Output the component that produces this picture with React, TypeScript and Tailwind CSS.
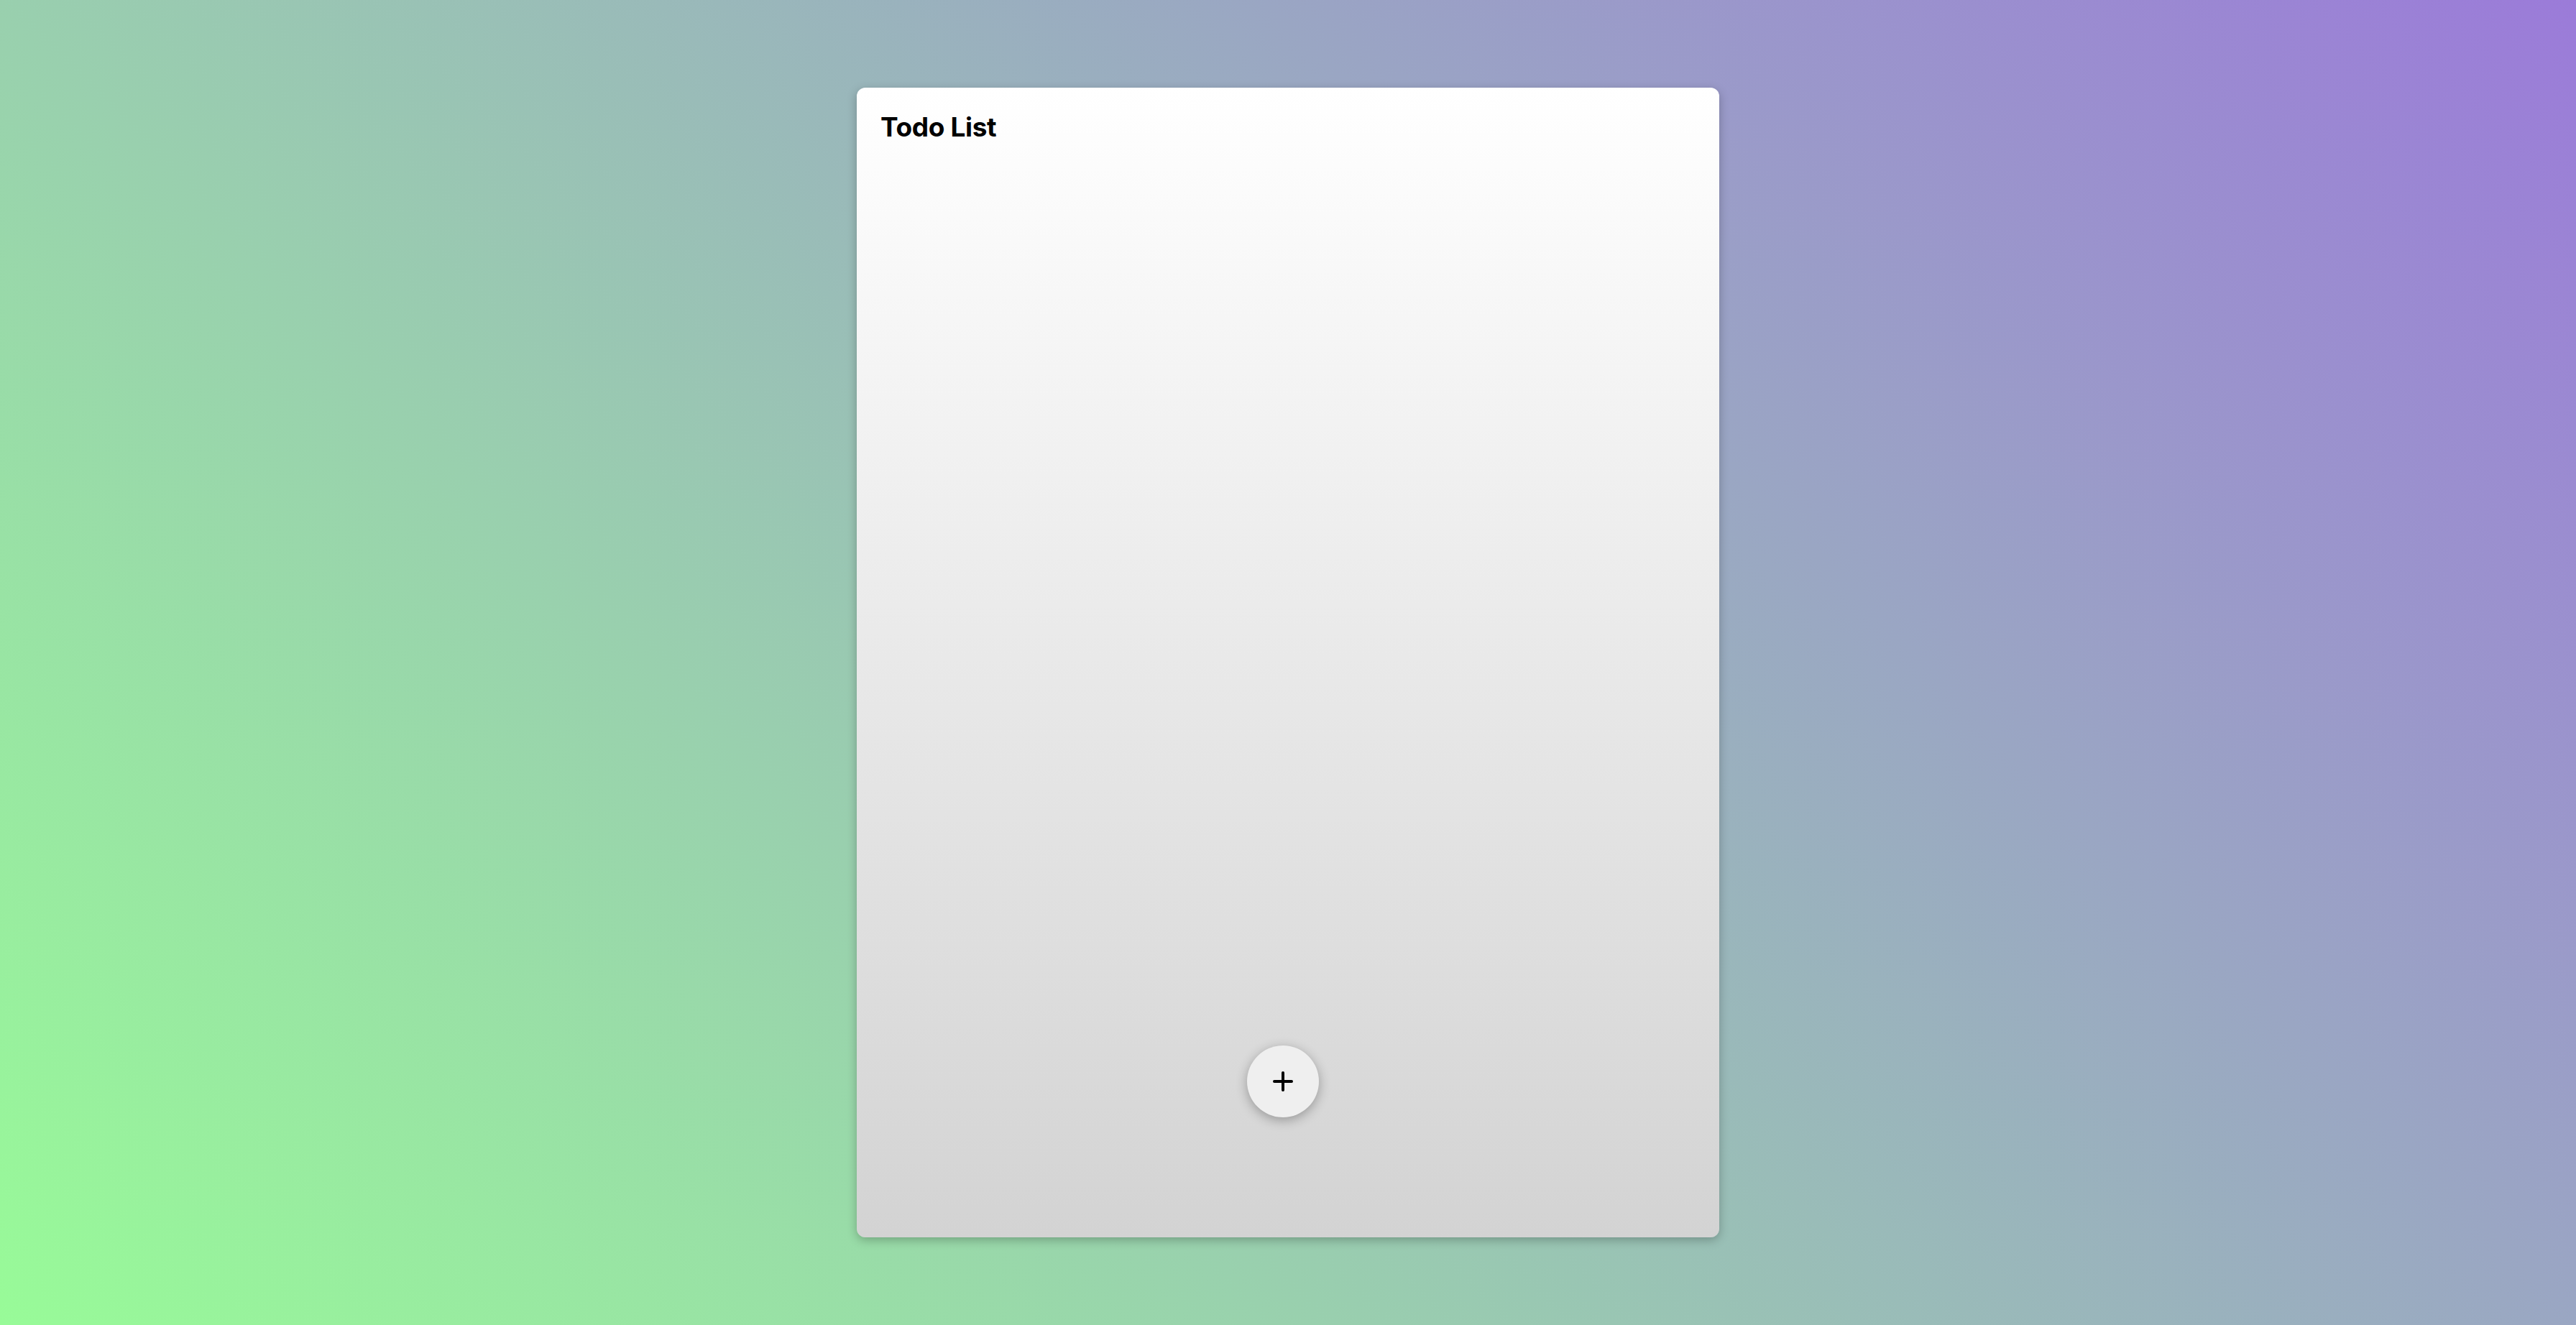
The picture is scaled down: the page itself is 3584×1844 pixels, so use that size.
export default function App() {
  return (
    <div className="flex h-screen w-full items-center justify-center bg-[linear-gradient(45deg,#98fb98,#9b7bd9)] font-['Inter',sans-serif]">
      <div className="relative h-[1600px] w-[1200px] rounded-[12px] bg-gradient-to-b from-white to-[#d3d3d3] px-[33px] py-[36px] shadow-[0_4px_14px_rgba(0,0,0,0.25)]">
        <h1 className="text-[37px] font-bold leading-none tracking-[-0.01em] text-black">Todo List</h1>
        <button className="absolute bottom-[167px] left-[543px] flex h-[100px] w-[100px] items-center justify-center rounded-full bg-[#efefef] shadow-[0_4px_16px_rgba(0,0,0,0.3)]">
          <svg width="28" height="28" viewBox="0 0 28 28" fill="none" stroke="black" strokeWidth="4" strokeLinecap="round">
            <line x1="14" y1="2" x2="14" y2="26" />
            <line x1="2" y1="14" x2="26" y2="14" />
          </svg>
        </button>
      </div>
    </div>
  );
}
